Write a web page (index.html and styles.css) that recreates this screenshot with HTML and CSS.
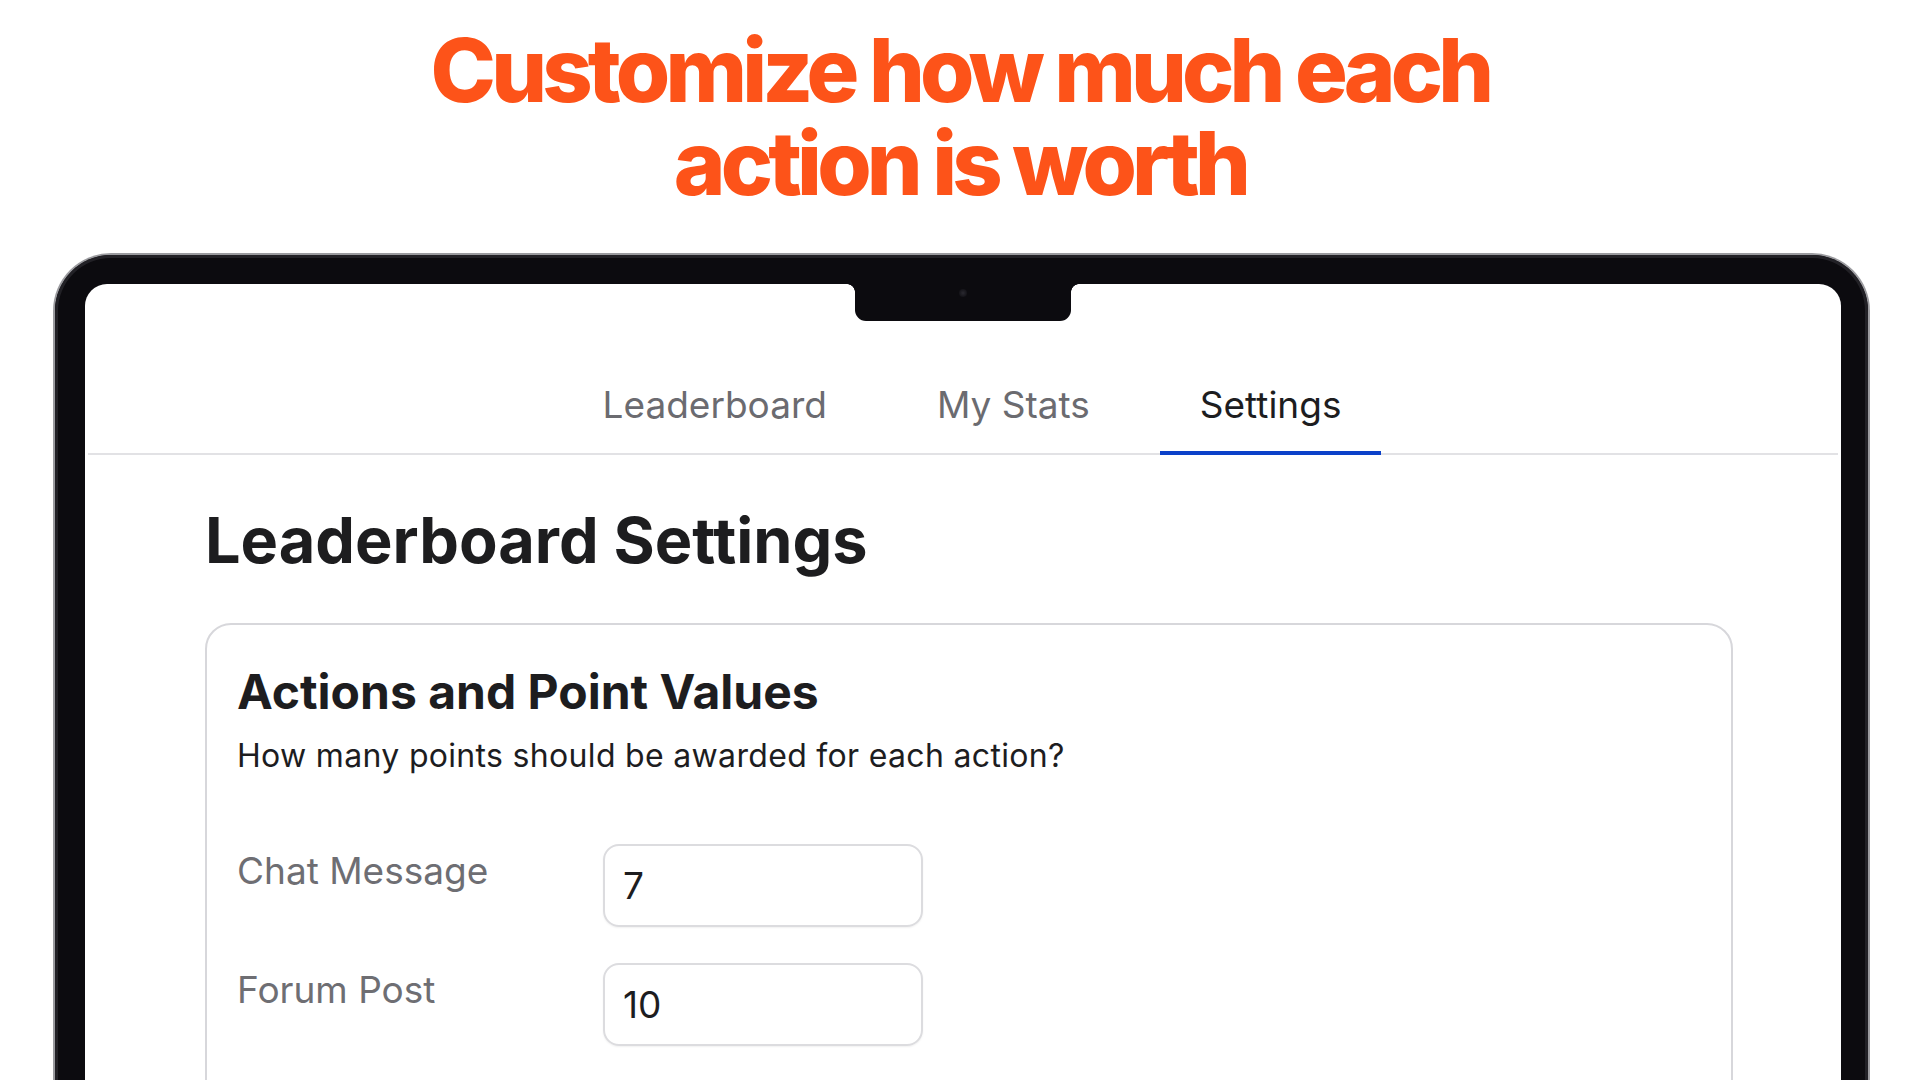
FILE: index.html
```html
<!DOCTYPE html>
<html lang="en">
<head>
<meta charset="utf-8">
<title>Leaderboard Settings</title>
<link rel="stylesheet" href="styles.css">
</head>
<body>
  <h1 class="headline"><span class="headline-line">Customize how much each</span><span class="headline-line">action is worth</span></h1>
  <div class="device">
    <div class="bezel">
      <div class="screen">
        <div class="notch"><span class="camera"></span></div>
        <nav class="tabs">
          <div class="tab">Leaderboard</div>
          <div class="tab">My Stats</div>
          <div class="tab active">Settings</div>
        </nav>
        <main class="content">
          <h2 class="page-title">Leaderboard Settings</h2>
          <section class="card">
            <h3 class="card-title">Actions and Point Values</h3>
            <p class="card-sub">How many points should be awarded for each action?</p>
            <div class="rows">
              <div class="row">
                <label class="row-label">Chat Message</label>
                <div class="input">7</div>
              </div>
              <div class="row">
                <label class="row-label">Forum Post</label>
                <div class="input">10</div>
              </div>
            </div>
          </section>
        </main>
      </div>
    </div>
  </div>
</body>
</html>
```

FILE: styles.css
```css
html, body {
  margin: 0;
  padding: 0;
  background: #ffffff;
}
body {
  width: 1920px;
  height: 1080px;
  overflow: hidden;
  font-family: Inter, "Noto Sans", "Liberation Sans", sans-serif;
}
.headline {
  margin: 0;
  padding-top: 24px;
  text-align: center;
  font-family: Inter, "Liberation Sans", sans-serif;
  font-weight: 800;
  font-size: 88px;
  letter-spacing: -0.055em;
  color: #fd5319;
}
.headline-line {
  display: block;
  height: 93px;
  line-height: 93px;
  overflow: visible;
}
.device {
  margin: 43px 0 0 53px;
  width: 1813px;
  height: 900px;
  padding: 2px 2px 0;
  background: #9b9b9f;
  border-radius: 58px 58px 0 0;
}
.bezel {
  height: 100%;
  box-sizing: border-box;
  padding: 29px 27px 0 30px;
  background: #0c0b0f;
  border-radius: 56px 56px 0 0;
  box-shadow: inset 0 0 0 3px #222126;
}
.screen {
  position: relative;
  height: 100%;
  background: #ffffff;
  border-radius: 22px 22px 0 0;
}
.notch {
  position: absolute;
  top: 0;
  left: 50%;
  width: 216px;
  height: 37px;
  margin-left: -108px;
  background: #0c0b0f;
  border-radius: 0 0 11px 11px;
}
.notch::before,
.notch::after {
  content: "";
  position: absolute;
  top: 0;
  width: 8px;
  height: 8px;
}
.notch::before {
  left: -8px;
  background: radial-gradient(circle at 0 100%, transparent 7.5px, #0c0b0f 8px);
}
.notch::after {
  right: -8px;
  background: radial-gradient(circle at 100% 100%, transparent 7.5px, #0c0b0f 8px);
}
.camera {
  position: absolute;
  left: 50%;
  top: 5px;
  width: 8px;
  height: 8px;
  margin-left: -4px;
  border-radius: 50%;
  background: radial-gradient(circle, #2a2930 0, #141318 70%);
}
.tabs {
  display: flex;
  justify-content: center;
  gap: 30px;
  margin: 0 3px;
  padding: 99px 0 0 18px;
  border-bottom: 2px solid #e2e2e5;
}
.tab {
  padding: 0 40px 24px;
  font-size: 37px;
  line-height: 44px;
  color: #6b6b70;
  border-bottom: 4px solid transparent;
  margin-bottom: -2px;
}
.tab.active {
  color: #1d1d1f;
  border-bottom-color: #0b41c9;
}
.content {
  padding: 48px 108px 0 120px;
}
.page-title {
  margin: 0 0 46px;
  font-size: 63px;
  line-height: 74px;
  font-weight: 700;
  color: #1d1d1f;
}
.card {
  border: 2px solid #d7d7db;
  border-radius: 26px;
  padding: 38px 30px 60px;
  height: 600px;
}
.card-title {
  margin: 0;
  font-size: 48px;
  line-height: 58px;
  font-weight: 700;
  color: #1d1d1f;
}
.card-sub {
  margin: 15px 0 0;
  font-size: 32px;
  line-height: 40px;
  letter-spacing: 0.01em;
  color: #1d1d1f;
}
.rows {
  margin-top: 68px;
  display: flex;
  flex-direction: column;
  gap: 36px;
}
.row {
  display: flex;
  align-items: flex-start;
}
.row-label {
  width: 366px;
  padding-top: 5px;
  font-size: 37px;
  line-height: 44px;
  color: #6e6e73;
}
.input {
  box-sizing: border-box;
  width: 320px;
  height: 83px;
  padding: 0 18px;
  display: flex;
  align-items: center;
  border: 2px solid #dcdcdf;
  border-radius: 16px;
  box-shadow: 0 1px 2px rgba(0, 0, 0, 0.06);
  font-size: 37px;
  color: #1d1d1f;
}
```
